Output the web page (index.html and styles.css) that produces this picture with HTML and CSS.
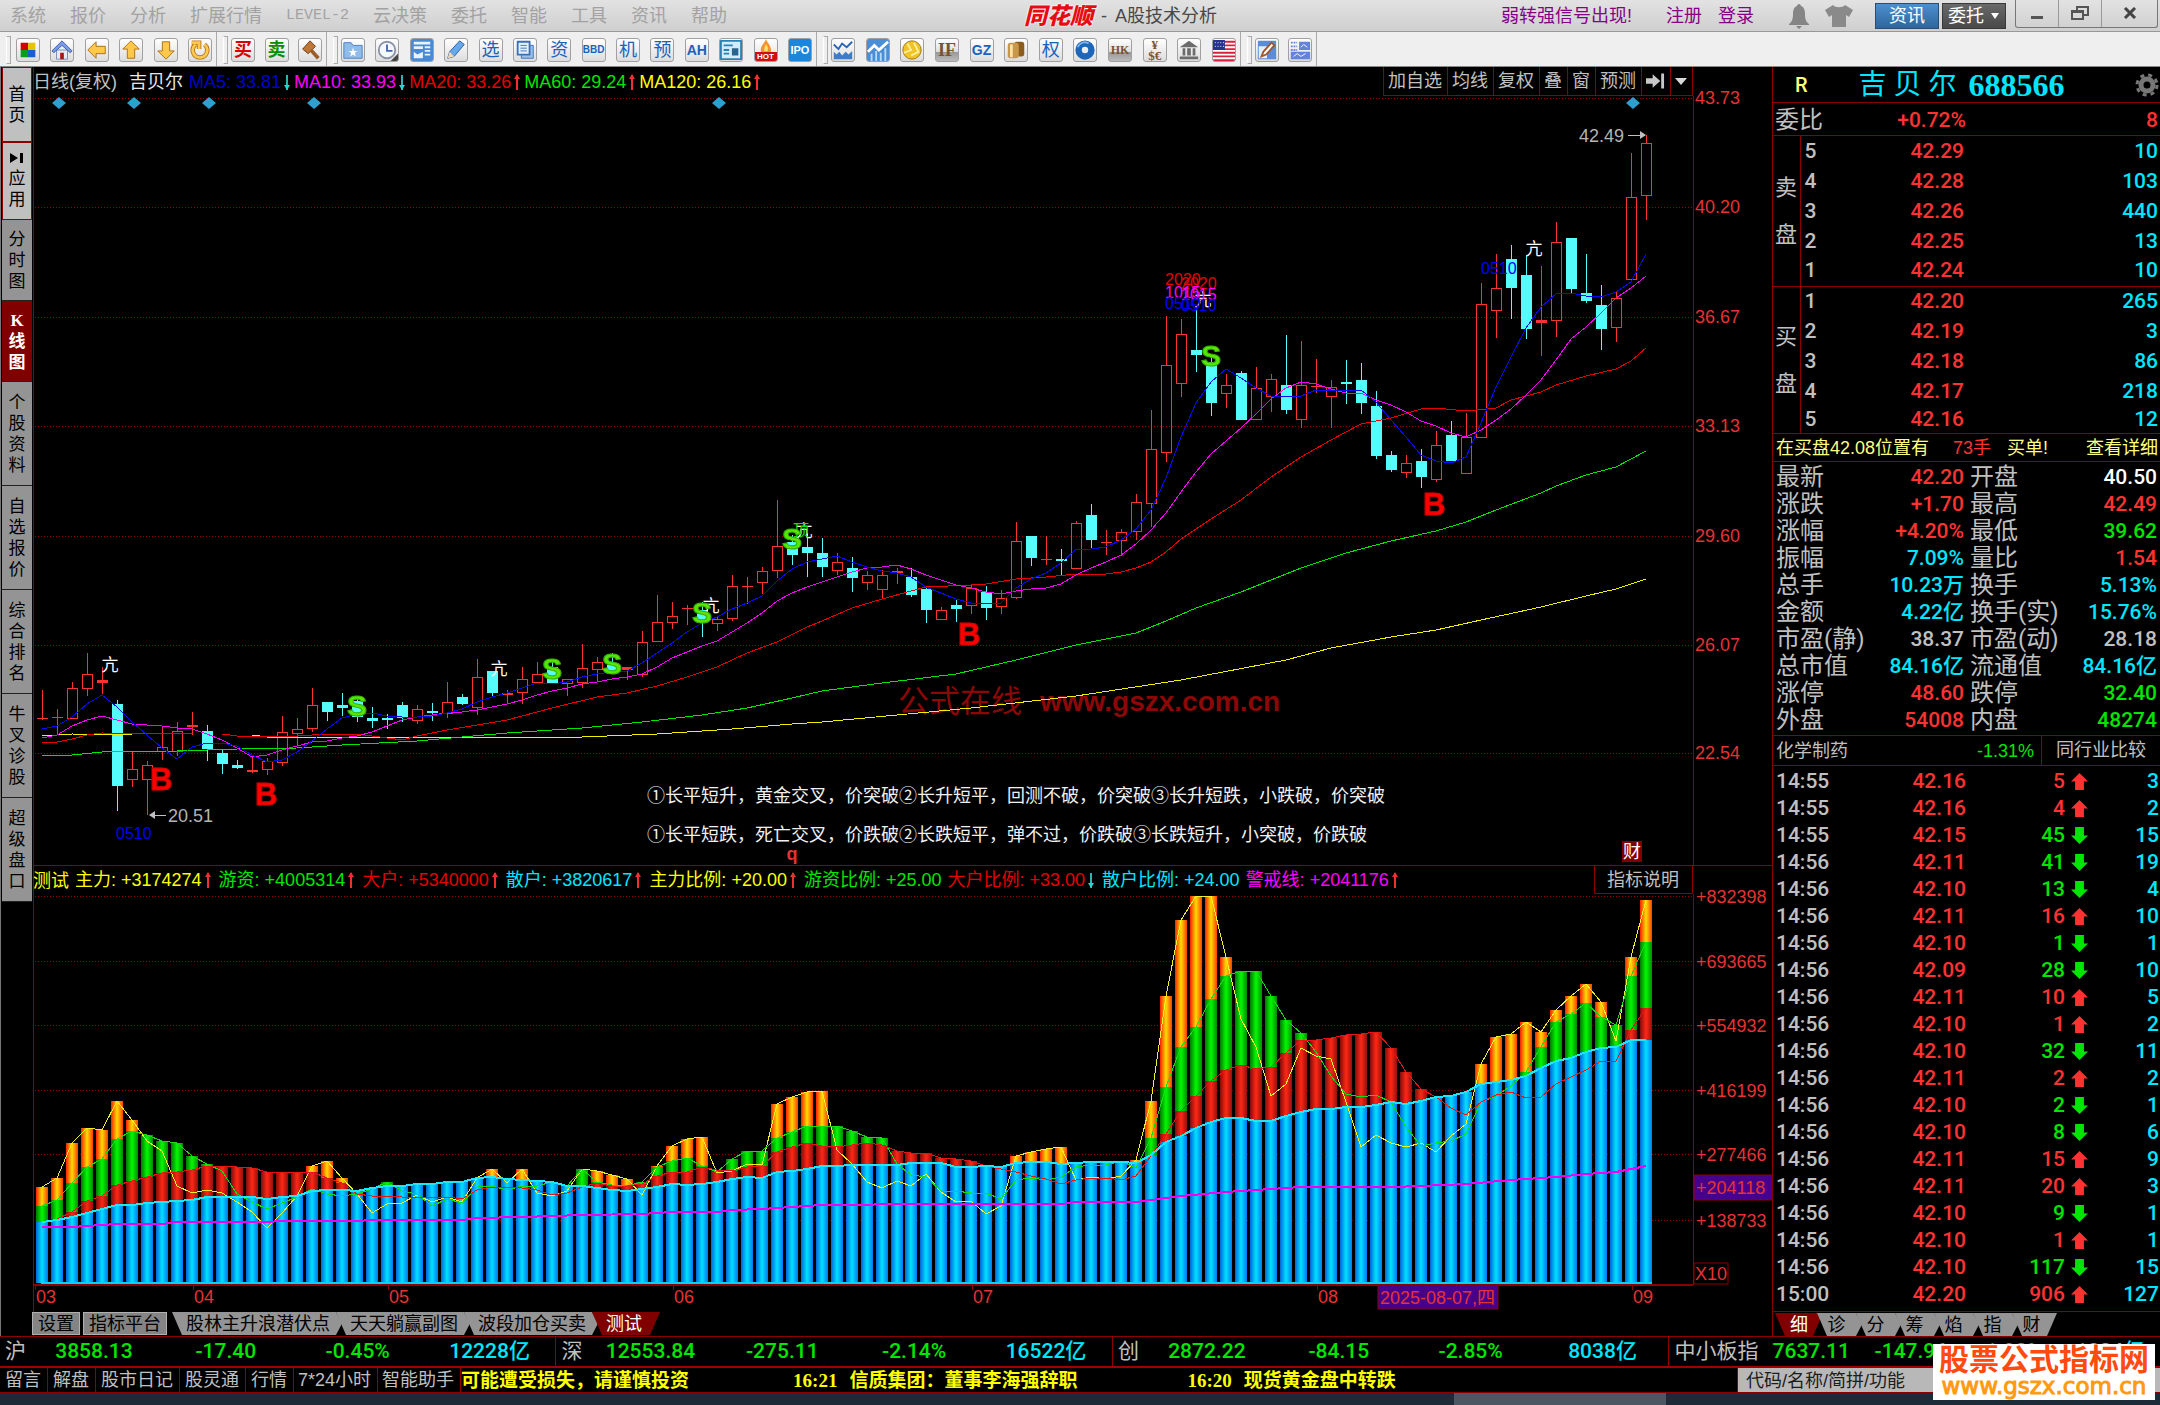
FILE: index.html
```html
<!DOCTYPE html>
<html lang="zh-CN">
<head>
<meta charset="utf-8">
<title>同花顺 - A股技术分析</title>
<link rel="stylesheet" href="styles.css">
</head>
<body>
<header class="titlebar">
  <nav class="menu">
    <a href="#">系统</a><a href="#">报价</a><a href="#">分析</a><a href="#">扩展行情</a><a href="#" class="latin">LEVEL-2</a><a href="#">云决策</a><a href="#">委托</a><a href="#">智能</a><a href="#">工具</a><a href="#">资讯</a><a href="#">帮助</a>
  </nav>
  <h1 class="app-title"><span class="logo">同花顺</span><span>-</span><span>A股技术分析</span></h1>
  <div class="account">
    <a href="#" class="signal">弱转强信号出现!</a><a href="#" class="register">注册</a><a href="#">登录</a>
    <svg class="bell" width="22" height="26" viewBox="0 0 22 26"><path d="M11 1c1 0 2 1 2 2 3 1 4 4 4 8 0 5 1 8 4 10v1H1v-1c3-2 4-5 4-10 0-4 1-7 4-8 0-1 1-2 2-2zM8 23h6l-3 3z" fill="#858585"/></svg>
    <svg class="shirt" width="30" height="24" viewBox="0 0 30 24"><path d="M9 1c2 3 10 3 12 0l8 5-4 7-3-2v12H8V11l-3 2-4-7z" fill="#8a8a8a"/></svg>
    <button class="pill blue">资讯</button>
    <button class="pill dark">委托<svg width="10" height="6" viewBox="0 0 10 6"><path d="M1 0h8L5 6z" fill="#fff"/></svg></button>
  </div>
  <div class="window-buttons">
    <button aria-label="最小化"><svg width="14" height="14" viewBox="0 0 14 14"><path d="M1 10h12v3H1z" fill="#555"/></svg></button>
    <button aria-label="还原"><svg width="18" height="14" viewBox="0 0 18 14"><path d="M6 4V1h11v8h-4M1 5h11v8H1zM1 6h11" fill="none" stroke="#555" stroke-width="2"/></svg></button>
    <button aria-label="关闭"><svg width="14" height="12" viewBox="0 0 14 12"><path d="M2 1l10 10M12 1L2 11" stroke="#444" stroke-width="3"/></svg></button>
  </div>
</header>

<div class="toolbar">
  <div class="tools g6">
    <button aria-label="面板"><svg viewBox="0 0 24 24"><path d="M4 4h8v8H4z" fill="#d40000"/><path d="M12 4h8v8h-8z" fill="#e8c400"/><path d="M4 12h8v8H4z" fill="#0a9c1e"/><path d="M12 12h8v8h-8z" fill="#1560d4"/></svg></button>
    <button aria-label="首页"><svg viewBox="0 0 24 24"><path d="M6 12h12v10H6z" fill="#e8e8f4" stroke="#7a86b8"/><path d="M1 13L12 2l11 11-2 2-9-8-9 8z" fill="#7c9ae4" stroke="#3a5cb4"/><path d="M10 15h4v7h-4z" fill="#b01010"/></svg></button>
    <button aria-label="后退"><svg viewBox="0 0 24 24"><path d="M2 12l9-9v5h10v8H11v5z" fill="#ffc84a" stroke="#a86c10"/></svg></button>
    <button aria-label="上翻"><svg viewBox="0 0 24 24"><path d="M12 2l9 9h-5v10H8V11H3z" fill="#ffc84a" stroke="#a86c10"/></svg></button>
    <button aria-label="下翻"><svg viewBox="0 0 24 24"><path d="M12 22l9-9h-5V3H8v10H3z" fill="#ffc84a" stroke="#a86c10"/></svg></button>
    <button aria-label="刷新"><svg viewBox="0 0 24 24"><path d="M17 6a8 8 0 1 1-10 0M3 4h8v7" fill="none" stroke="#b87818" stroke-width="5"/><path d="M17 6a8 8 0 1 1-10 0M3 4h8v7" fill="none" stroke="#ffc850" stroke-width="3"/></svg></button>
  </div>
  <div class="tools g3">
    <button class="glyph red">买</button>
    <button class="glyph green">卖</button>
    <button aria-label="法槌"><svg viewBox="0 0 24 24"><path d="M4 11L12 2l6 6-8 8z" fill="#c07838" stroke="#6e3a10"/><path d="M13 12l8 9" stroke="#9a5c28" stroke-width="4"/></svg></button>
  </div>
  <div class="tools g14">
    <button aria-label="收藏"><svg viewBox="0 0 24 24"><path d="M2 4h8l2 3h10v14H2z" fill="#8fbcea" stroke="#4a7fc0"/><path d="M12 9l1 4h4l-3 2 1 4-3-2-3 2 1-4-3-2h4z" fill="#fff"/></svg></button>
    <button aria-label="时钟"><svg viewBox="0 0 24 24"><circle cx="12" cy="12" r="9" fill="#f4f8ff" stroke="#8a94a8" stroke-width="2"/><path d="M12 6v7h6" fill="none" stroke="#4466b0" stroke-width="2"/><path d="M24 16v8h-8z" fill="#444"/></svg></button>
    <button aria-label="报表"><svg viewBox="0 0 24 24"><path d="M0 0h24v24H0z" fill="#4a8ad4"/><path d="M3 3h18v3H3zM3 8h10v3H3zM15 8h6v2h-6zM15 12h6v2h-6zM15 16h6v2h-6zM3 14l4 3 6-3v7H3z" fill="#e8f2ff"/></svg></button>
    <button aria-label="画笔"><svg viewBox="0 0 24 24"><path d="M3 21l2-7L16 2l5 4-11 13z" fill="#66a8ea" stroke="#2c5c9c"/><path d="M3 21l2-7 5 5z" fill="#f4d8b0"/></svg></button>
    <button class="glyph">选</button>
    <button aria-label="文档"><svg viewBox="0 0 24 24"><path d="M8 7h13v14H8z" fill="#9cc0ea" stroke="#3c70b4"/><path d="M4 3h13v14H4z" fill="#e4f0ff" stroke="#3c70b4" stroke-width="2"/><path d="M7 7h7M7 10h7M7 13h7" stroke="#3c70b4"/></svg></button>
    <button class="glyph">资</button>
    <button class="glyph tiny">BBD</button>
    <button class="glyph">机</button>
    <button class="glyph">预</button>
    <button class="glyph mid">AH</button>
    <button aria-label="新闻"><svg viewBox="0 0 24 24"><path d="M1 2h22v20H1z" fill="#d4ecfa" stroke="#2a82b4" stroke-width="2"/><path d="M4 7h10M4 12h6M4 16h6" stroke="#2a82b4" stroke-width="2"/><path d="M13 10h7v8h-7z" fill="#28648c"/></svg></button>
    <button aria-label="热点" class="hot"><svg viewBox="0 0 24 16"><path d="M12 0c1 5 7 7 6 16H6C4 8 10 7 12 0z" fill="#f8902c"/><path d="M12 6c2 3 3 5 2 9h-4c-1-4 1-6 2-9z" fill="#ffe060"/></svg><span>HOT</span></button>
    <button class="glyph ipo">IPO</button>
  </div>
  <div class="tools g12">
    <button aria-label="走势"><svg viewBox="0 0 24 24"><path d="M2 6l5 5 4-6 5 4 6-6" fill="none" stroke="#2864b4" stroke-width="2"/><path d="M2 22v-8l3 3 3-3 3 4 4-4 3 3 4-4v9z" fill="#3c7cc8"/></svg></button>
    <button aria-label="图表"><svg viewBox="0 0 24 24"><path d="M0 0h24v24H0z" fill="#4a8ed8"/><path d="M5 16v8M10 13v11M15 15v9M20 10v14" stroke="#bcd8f8" stroke-width="2"/><path d="M1 14l7-7 5 5L23 3" fill="none" stroke="#fff" stroke-width="3"/></svg></button>
    <button aria-label="金币"><svg viewBox="0 0 24 24"><circle cx="12" cy="12" r="10" fill="#f0c428" stroke="#9c7410"/><path d="M7 5l4 7-8 3M14 4l5 10-8 4" fill="none" stroke="#fff0a0" stroke-width="2"/></svg></button>
    <button class="glyph brown">IF</button>
    <button class="glyph mid">GZ</button>
    <button aria-label="商品"><svg viewBox="0 0 24 24"><rect x="10" y="3" width="11" height="16" rx="3" fill="#8c5c1c"/><rect x="3" y="4" width="12" height="17" rx="3" fill="#c8984a"/><path d="M7 6v14" stroke="#fbe4a8" stroke-width="3"/></svg></button>
    <button class="glyph">权</button>
    <button aria-label="基金"><svg viewBox="0 0 24 24"><circle cx="12" cy="12" r="7" fill="none" stroke="#1f66b8" stroke-width="7"/><path d="M4 9c2-5 8-7 12-4" fill="none" stroke="#7cb4ee" stroke-width="2"/></svg></button>
    <button class="glyph brown small">HK</button>
    <button class="glyph brown two"><span>¥</span><span>$€</span></button>
    <button aria-label="银行"><svg viewBox="0 0 24 24"><path d="M2 9l10-7 10 7zM5 10h3v8H5zM10 10h4v8h-4zM16 10h3v8h-3zM2 19h20v3H2z" fill="#6c6c6c"/></svg></button>
    <button aria-label="美股"><svg viewBox="0 0 24 24"><path d="M0 1h24v22H0z" fill="#fff"/><path d="M0 3h24M0 7h24M0 11h24M0 15h24M0 19h24M0 23h24" stroke="#d8203c" stroke-width="2"/><path d="M0 1h13v11H0z" fill="#24348c"/><path d="M2 4h10M2 8h10" stroke="#fff" stroke-width="1" stroke-dasharray="1 2"/></svg></button>
  </div>
  <div class="tools g2">
    <button aria-label="编辑图表"><svg viewBox="0 0 24 24"><path d="M2 2h20v20H2z" fill="#5a8cd8"/><path d="M3 8h9v13H3z" fill="#e4eefc"/><path d="M6 19l2-5 9-10 3 3-9 10z" fill="#fff" stroke="#a05828" stroke-width="2"/></svg></button>
    <button aria-label="布局"><svg viewBox="0 0 24 24"><path d="M11 3h12v9H11zM2 14h21v8H2z" fill="#6484dc"/><path d="M2 4h7M2 8h7M2 12h7" stroke="#6484dc" stroke-width="2" stroke-dasharray="2 1"/><path d="M13 9l3-3 4 3M5 19l4-3 4 3 5-3" fill="none" stroke="#fff"/></svg></button>
  </div>
</div>

<main class="workspace">
  <nav class="sidebar">
    <button class="side light home">首页</button>
    <button class="side light app"><svg width="14" height="12" viewBox="0 0 14 12"><path d="M0 1l8 5-8 5zM10 1h3v10h-3z" fill="#000"/></svg>应用</button>
    <button class="side three">分时图</button>
    <button class="side three active">K线图</button>
    <button class="side four">个股资料</button>
    <button class="side four">自选报价</button>
    <button class="side four">综合排名</button>
    <button class="side four">牛叉诊股</button>
    <button class="side four">超级盘口</button>
  </nav>

  <section class="charts">
    <div class="pane-head">
      <p class="readout">
        <span class="name">日线(复权)</span><span class="stock">吉贝尔</span>
        <span class="val c-blue">MA5: 33.81<i class="dn"></i></span><span class="val c-mag">MA10: 33.93<i class="dn"></i></span><span class="val c-red">MA20: 33.26<i class="up"></i></span><span class="val c-green">MA60: 29.24<i class="up"></i></span><span class="val c-yel">MA120: 26.16<i class="up"></i></span>
      </p>
      <div class="pane-tools">
        <button>加自选</button><button>均线</button><button>复权</button><button>叠</button><button>窗</button><button>预测</button><button aria-label="下一只"><svg width="19" height="16" viewBox="0 0 20 16"><path d="M0 5h7V1l8 7-8 7v-4H0zM16 0h3v16h-3z" fill="#c8c8c8"/></svg></button><button aria-label="更多"><svg width="12" height="7" viewBox="0 0 12 7"><path d="M0 0h12L6 7z" fill="#d8d8d8"/></svg></button>
      </div>
    </div>
    <svg class="plot price" id="price"></svg>
    <div class="pane-head sub">
      <p class="readout">
        <span class="title c-yel">测试</span>
        <span class="val wide c-yel">主力: +3174274<i class="up"></i></span><span class="val wide c-green">游资: +4005314<i class="up"></i></span><span class="val wide c-red">大户: +5340000<i class="up"></i></span><span class="val wide c-cyan">散户: +3820617<i class="up"></i></span><span class="val wide c-yel">主力比例: +20.00<i class="up"></i></span><span class="val flat c-green">游资比例: +25.00</span><span class="val wide c-red">大户比例: +33.00<i class="dn"></i></span><span class="val flat c-cyan">散户比例: +24.00</span><span class="val wide c-mag">警戒线: +2041176<i class="up"></i></span>
      </p>
      <button class="explain">指标说明</button>
    </div>
    <svg class="plot volume" id="volume"></svg>
    <div class="tabs">
      <button class="box">设置</button><button class="box">指标平台</button>
      <button class="tab first">股林主升浪潜伏点</button><button class="tab">天天躺赢副图</button><button class="tab">波段加仓买卖</button><button class="tab on">测试</button>
    </div>
  </section>

  <aside class="quote">
    <header class="quote-head">
      <span class="flag">R</span>
      <h2><span>吉 贝 尔</span><b>688566</b></h2>
      <svg width="24" height="24" viewBox="0 0 24 24"><circle cx="12" cy="12" r="6" fill="none" stroke="#777" stroke-width="5"/><circle cx="12" cy="12" r="10" fill="none" stroke="#777" stroke-width="3" stroke-dasharray="4 4"/></svg>
    </header>
    <div class="ratio"><span class="lab">委比</span><b class="r">+0.72%</b><b class="r">8</b></div>
    <table class="book">
      <tbody>
        <tr><th rowspan="5">卖<br>盘</th><td>5</td><td class="r">42.29</td><td class="c">10</td></tr>
        <tr><td>4</td><td class="r">42.28</td><td class="c">103</td></tr>
        <tr><td>3</td><td class="r">42.26</td><td class="c">440</td></tr>
        <tr><td>2</td><td class="r">42.25</td><td class="c">13</td></tr>
        <tr><td>1</td><td class="r">42.24</td><td class="c">10</td></tr>
      </tbody>
      <tbody>
        <tr><th rowspan="5">买<br>盘</th><td>1</td><td class="r">42.20</td><td class="c">265</td></tr>
        <tr><td>2</td><td class="r">42.19</td><td class="c">3</td></tr>
        <tr><td>3</td><td class="r">42.18</td><td class="c">86</td></tr>
        <tr><td>4</td><td class="r">42.17</td><td class="c">218</td></tr>
        <tr class="end"><td>5</td><td class="r">42.16</td><td class="c">12</td></tr>
      </tbody>
    </table>
    <p class="notice"><span>在买盘42.08位置有</span><span class="r">73手</span><span>买单!</span><a href="#">查看详细</a></p>
    <table class="stats">
      <tr><th>最新</th><td class="r">42.20</td><th>开盘</th><td class="w">40.50</td></tr>
      <tr><th>涨跌</th><td class="r">+1.70</td><th>最高</th><td class="r">42.49</td></tr>
      <tr><th>涨幅</th><td class="r">+4.20%</td><th>最低</th><td class="g">39.62</td></tr>
      <tr><th>振幅</th><td class="c">7.09%</td><th>量比</th><td class="r">1.54</td></tr>
      <tr><th>总手</th><td class="c">10.23万</td><th>换手</th><td class="c">5.13%</td></tr>
      <tr><th>金额</th><td class="c">4.22亿</td><th>换手(实)</th><td class="c">15.76%</td></tr>
      <tr><th>市盈(静)</th><td>38.37</td><th>市盈(动)</th><td>28.18</td></tr>
      <tr><th>总市值</th><td class="c">84.16亿</td><th>流通值</th><td class="c">84.16亿</td></tr>
      <tr><th>涨停</th><td class="r">48.60</td><th>跌停</th><td class="g">32.40</td></tr>
      <tr><th>外盘</th><td class="r">54008</td><th>内盘</th><td class="g">48274</td></tr>
    </table>
    <div class="industry"><span>化学制药</span><span class="g">-1.31%</span><a href="#">同行业比较</a></div>
    <div class="ticks">
      <table>
        <tr><td>14:55</td><td class="r">42.16</td><td class="r">5</td><td><i class="bu"></i></td><td class="c">3</td></tr>
        <tr><td>14:55</td><td class="r">42.16</td><td class="r">4</td><td><i class="bu"></i></td><td class="c">2</td></tr>
        <tr><td>14:55</td><td class="r">42.15</td><td class="g">45</td><td><i class="bd"></i></td><td class="c">15</td></tr>
        <tr><td>14:56</td><td class="r">42.11</td><td class="g">41</td><td><i class="bd"></i></td><td class="c">19</td></tr>
        <tr><td>14:56</td><td class="r">42.10</td><td class="g">13</td><td><i class="bd"></i></td><td class="c">4</td></tr>
        <tr><td>14:56</td><td class="r">42.11</td><td class="r">16</td><td><i class="bu"></i></td><td class="c">10</td></tr>
        <tr><td>14:56</td><td class="r">42.10</td><td class="g">1</td><td><i class="bd"></i></td><td class="c">1</td></tr>
        <tr><td>14:56</td><td class="r">42.09</td><td class="g">28</td><td><i class="bd"></i></td><td class="c">10</td></tr>
        <tr><td>14:56</td><td class="r">42.11</td><td class="r">10</td><td><i class="bu"></i></td><td class="c">5</td></tr>
        <tr><td>14:56</td><td class="r">42.10</td><td class="r">1</td><td><i class="bu"></i></td><td class="c">2</td></tr>
        <tr><td>14:56</td><td class="r">42.10</td><td class="g">32</td><td><i class="bd"></i></td><td class="c">11</td></tr>
        <tr><td>14:56</td><td class="r">42.11</td><td class="r">2</td><td><i class="bu"></i></td><td class="c">2</td></tr>
        <tr><td>14:56</td><td class="r">42.10</td><td class="g">2</td><td><i class="bd"></i></td><td class="c">1</td></tr>
        <tr><td>14:56</td><td class="r">42.10</td><td class="g">8</td><td><i class="bd"></i></td><td class="c">6</td></tr>
        <tr><td>14:56</td><td class="r">42.11</td><td class="r">15</td><td><i class="bu"></i></td><td class="c">9</td></tr>
        <tr><td>14:56</td><td class="r">42.11</td><td class="r">20</td><td><i class="bu"></i></td><td class="c">3</td></tr>
        <tr><td>14:56</td><td class="r">42.10</td><td class="g">9</td><td><i class="bd"></i></td><td class="c">1</td></tr>
        <tr><td>14:56</td><td class="r">42.10</td><td class="r">1</td><td><i class="bu"></i></td><td class="c">1</td></tr>
        <tr><td>14:56</td><td class="r">42.10</td><td class="g">117</td><td><i class="bd"></i></td><td class="c">15</td></tr>
        <tr><td>15:00</td><td class="r">42.20</td><td class="r">906</td><td><i class="bu"></i></td><td class="c">127</td></tr>
      </table>
    </div>
    <div class="tabs right">
      <button class="tab on">细</button><button class="tab">诊</button><button class="tab">分</button><button class="tab">筹</button><button class="tab">焰</button><button class="tab">指</button><button class="tab last">财</button>
    </div>
  </aside>
</main>

<section class="indices">
  <div class="index"><span>沪</span><b>3858.13</b><b>-17.40</b><b>-0.45%</b><b class="c">12228亿</b></div>
  <div class="index"><span>深</span><b>12553.84</b><b>-275.11</b><b>-2.14%</b><b class="c">16522亿</b></div>
  <div class="index"><span>创</span><b>2872.22</b><b>-84.15</b><b>-2.85%</b><b class="c">8038亿</b></div>
  <div class="index small"><span>中小板指</span><b>7637.11</b><b>-147.96</b><b>-1.90%</b><b class="c">1234亿</b></div>
</section>

<footer class="ticker">
  <nav><a href="#">留言</a><a href="#">解盘</a><a href="#">股市日记</a><a href="#">股灵通</a><a href="#">行情</a><a href="#">7*24小时</a><a href="#">智能助手</a></nav>
  <p class="news"><span class="n1">可能遭受损失，请谨慎投资</span><span class="n2"><time>16:21</time>信质集团：董事李海强辞职</span><span><time>16:20</time>现货黄金盘中转跌</span></p>
  <input class="search" type="text" aria-label="搜索" placeholder="代码/名称/简拼/功能">
</footer>
<div class="desktop"><span></span></div>
<div class="sitemark"><strong>股票公式指标网</strong><span>www.gszx.com.cn</span></div>
<script src="charts.js"></script>
</body>
</html>
```
FILE: styles.css
```css
* { box-sizing: border-box; }
html, body { height: 100%; }
body {
  margin: 0; display: flex; flex-direction: column; background: #000; color: #c0c0c0;
  font: 18px/24px "Liberation Sans", "Noto Sans CJK SC", sans-serif; overflow: hidden;
}
button { font: inherit; color: inherit; background: none; border: 0; padding: 0; margin: 0; }
a { color: inherit; text-decoration: none; }
p, h1, h2 { margin: 0; font: inherit; }
table { border-collapse: collapse; width: 100%; table-layout: fixed; }
th, td { padding: 0; font-weight: inherit; }
svg { display: block; flex: none; }
.r { color: #ff3232; }
.g { color: #00e600; }
.c { color: #00e6ff; }
.w { color: #fff; }
.c-blue { color: #0000d2; }
.c-mag { color: #ff00ff; }
.c-red { color: #e60000; }
.c-green { color: #00e600; }
.c-yel { color: #ffff00; }
.c-cyan { color: #00e6ff; }

/* title bar */
.titlebar {
  height: 32px; flex: none; display: flex; position: relative; align-items: center;
  background: linear-gradient(#e2e2e2, #cfcfcf); border-bottom: 1px solid #989898; color: #484848;
}
.menu { display: flex; gap: 24px; padding-left: 10px; color: #a2a2a2; }
.menu .latin { font-family: "Liberation Mono", monospace; font-size: 15px; }
.app-title {
  position: absolute; left: 50%; margin-left: -56px; display: flex; align-items: center; gap: 8px;
}
.logo { font-size: 23px; font-weight: 900; font-style: italic; color: #e60c14; text-shadow: 0 0 2px #fff, 0 0 2px #fff; }
.account { margin-left: auto; display: flex; align-items: center; color: #860086; }
.signal { margin-right: 34px; }
.register { margin-right: 16px; }
.bell { margin: 0 14px 0 34px; }
.shirt { margin-right: 21px; }
.pill {
  width: 64px; height: 26px; margin-right: 3px; color: #fff; border: 1px solid #2a4d74;
  background: linear-gradient(#4b90cf, #2f659c); display: flex; align-items: center; justify-content: center; gap: 6px;
}
.pill.dark { background: linear-gradient(#6a6a6a, #484848); border-color: #3a3a3a; }
.window-buttons { display: flex; margin: 0 2px 4px 6px; border: 1px solid #777; border-top: 0; border-radius: 0 0 3px 3px; }
.window-buttons button { width: 43px; height: 27px; display: flex; align-items: center; justify-content: center; border-right: 1px solid #999; }
.window-buttons button:last-child { width: 55px; border: 0; }

/* icon toolbar */
.toolbar { height: 35px; flex: none; display: flex; background: #efefef; border-bottom: 1px solid #888; }
.tools {
  display: flex; justify-content: space-between; align-items: center; padding: 1px 4px 0 14px;
  border-right: 1px solid #aaa; position: relative;
}
.tools::before { content: ""; position: absolute; left: 6px; top: 4px; width: 3px; height: 26px; border: 1px solid #aaa; border-left-color: #fff; }
.tools button {
  width: 24px; height: 24px; border: 1px solid #a0a0a0; border-radius: 3px; overflow: hidden;
  background: linear-gradient(#fff, #dcdcdc); display: flex; align-items: center; justify-content: center;
}
.tools button svg { width: 22px; height: 22px; }
.g6 { width: 217px; padding-left: 16px; }
.g3 { width: 110px; }
.g14 { width: 490px; }
.g12 { width: 424px; }
.g2 { width: 76px; }
.tools .glyph { font-size: 18px; line-height: 22px; color: #1a62bc; }
.tools .red { color: #d80000; font-weight: 700; }
.tools .green { color: #0a8c00; font-weight: 700; }
.tools .tiny { font-size: 10px; font-weight: 700; }
.tools .mid { font-size: 14px; font-weight: 700; }
.tools .small { font-size: 12px; font-weight: 700; }
.tools .ipo { font-size: 11px; font-weight: 700; color: #fff; background: #1a86dc; }
.tools .brown { color: #7a5230; font-family: "Liberation Serif", serif; font-weight: 700; background: linear-gradient(#fff, #ddd 60%, #999 61%, #bbb); }
.tools .two { flex-direction: column; font-size: 13px; line-height: 11px; background: linear-gradient(#fff, #dcdcdc); }
.tools .hot { flex-direction: column; justify-content: flex-end; }
.tools .hot svg { height: 13px; }
.tools .hot span { width: 100%; background: #cc1010; color: #fff; font-size: 8px; line-height: 9px; font-weight: 700; text-align: center; }

/* workspace */
.workspace { flex: 1; min-height: 0; display: flex; }
.sidebar { width: 33px; flex: none; padding-left: 1px; border-left: 1px solid #777; }
.side {
  width: 30px; display: flex; flex-direction: column; align-items: center; justify-content: center;
  font: 17px/21px "Liberation Serif", "Noto Sans CJK SC", serif; color: #000; background: #949494;
  border-bottom: 1px solid #222; padding: 0 6px; word-break: break-all;
}
.light { background: #c0c0c0; border: 1px solid #8c0000; padding: 0 5px; }
.home { height: 75px; }
.app { height: 78px; }
.app svg { margin-bottom: 4px; }
.three { height: 81px; }
.four { height: 104px; }
.active { background: #800000; color: #fff; font-weight: 700; }
.charts { flex: 1; min-width: 0; display: flex; flex-direction: column; border-left: 1px solid #8c0000; }
.pane-head { height: 29px; flex: none; display: flex; justify-content: space-between; padding-right: 79px; }
.sub { border-top: 1px solid #8c0000; }
.readout { display: flex; white-space: nowrap; line-height: 30px; margin-left: -1px; }
.name { margin-right: 12px; }
.stock { color: #e8e8e8; margin-right: 6px; }
.title { margin-right: 6px; }
.val { display: flex; align-items: center; }
.flat { margin-right: 6px; }
.val i { width: 13px; height: 18px; }
.wide i { width: 17px; }
.up, .dn { position: relative; }
.up::before, .dn::before { content: ""; position: absolute; left: 5px; top: 2px; width: 2px; height: 15px; background: #f03030; }
.dn::before { background: #2ab4b4; }
.up::after, .dn::after { content: ""; position: absolute; left: 3px; border: 3px solid transparent; border-bottom: 5px solid #f03030; top: -2px; }
.dn::after { border-bottom: 3px solid transparent; border-top: 5px solid #2ad4d4; top: 12px; }
.pane-tools { display: flex; border-right: 1px solid #8c0000; border-bottom: 1px solid #8c0000; }
.pane-tools button { border-left: 1px solid #8c0000; padding: 0 5px 0 4px; display: flex; align-items: center; }
.explain { border: 1px solid #8c0000; border-top: 0; padding: 0 13px 0 12px; line-height: 28px; }
.plot { width: 100%; min-height: 0; overflow: visible; }
.price { flex: 770 1 0; }
.volume { flex: 417 1 0; }
.plot text { font-size: 18px; fill: #e63232; }

/* slanted tabs */
.tabs { height: 25px; flex: none; display: flex; padding: 1px 0; }
.charts .tabs { margin-left: -2px; }
.box { background: #848484; color: #000; border: 1px solid #b0b0b0; padding: 0 5px; margin-right: 3px; line-height: 20px; }
.tab {
  height: 23px; line-height: 22px; padding: 0 12px 0 14px; margin-left: -6px; background: #949494; color: #000;
  clip-path: polygon(0 0, calc(100% - 6px) 0, 100% 50%, calc(100% - 6px) 100%, 10px 100%);
}
.tab.first { margin-left: 2px; }
.tab.on, .tab.last { padding-right: 18px; clip-path: polygon(0 0, 100% 0, calc(100% - 10px) 100%, 10px 100%); }
.tab.on { background: #800000; color: #fff; }
.tabs.right { border-top: 1px solid #8c0000; padding: 1px 0 0 2px; }
.tabs.right .tab { width: 45px; padding: 0 6px 0 0; }
.tabs.right .tab.on { width: 48px; margin-left: 0; padding: 0; }

/* quote panel */
.quote { width: 388px; flex: none; display: flex; flex-direction: column; border-left: 1px solid #8c0000; }
.quote-head { height: 36px; flex: none; display: flex; align-items: center; padding: 0 1px 0 22px; border-bottom: 1px solid #8c0000; }
.flag { color: #ffff80; font-size: 20px; font-weight: 500; font-family: Roboto, sans-serif; }
.quote-head h2 { margin: 0 auto 0 51px; display: flex; align-items: center; gap: 12px; color: #00e6ff; font: 28px/34px "Liberation Serif", "Noto Sans CJK SC", serif; }
.quote-head b { font-size: 32px; }
.ratio, .book, .stats, .ticks { font: 500 21px/27px Roboto, "Noto Sans CJK SC", sans-serif; }
.ratio { height: 33px; flex: none; display: grid; grid-template-columns: 76px 115px 1fr; align-items: center; padding: 3px 2px 0 2px; text-align: right; border-bottom: 1px solid #8c0000; }
.ratio b, .index b { font-weight: 500; }
.lab, .book th, .stats th { font-size: 24px; font-weight: 400; text-align: left; }
.book tbody { border-bottom: 1px solid #8c0000; }
.book tr { height: 30px; }
.book .end { height: 27px; }
.book th { width: 27px; border-right: 1px solid #8c0000; line-height: 47px; padding-left: 2px; font-size: 22px; }
.book td { text-align: right; padding-right: 2px; }
.book td:nth-last-child(3) { width: 40px; text-align: left; padding-left: 4px; }
.book td:nth-last-child(2) { width: 126px; }
.notice { height: 28px; flex: none; display: flex; align-items: center; padding: 0 2px 0 3px; color: #ffff80; border-bottom: 1px solid #8c0000; white-space: nowrap; }
.notice .r { margin: 0 16px 0 24px; }
.notice a { margin-left: auto; }
.stats { margin: 2px 0 1px; }
.stats tr { height: 27px; }
.stats th { padding-left: 3px; white-space: nowrap; }
.stats td { text-align: right; padding-right: 3px; white-space: nowrap; }
.stats th:first-child { width: 93px; }
.stats td:nth-child(2) { width: 101px; }
.industry { height: 31px; flex: none; display: flex; align-items: center; padding-left: 3px; border: solid #8c0000; border-width: 1px 0; }
.industry .g { margin: 0 7px 0 auto; }
.industry a { border-left: 1px solid #8c0000; padding: 2px 14px; line-height: 25px; }
.ticks { flex: 1; min-height: 0; padding: 2px 1px 0 3px; }
.ticks tr { height: 27px; }
.ticks td { text-align: right; }
.ticks td:first-child { text-align: left; width: 60px; }
.ticks td:nth-child(2) { width: 130px; }
.ticks td:nth-child(3) { width: 99px; }
.ticks td:nth-child(4) { width: 28px; }
.ticks i { display: block; width: 17px; height: 17px; margin-left: 6px; background: #ff3232; clip-path: polygon(50% 0, 100% 50%, 76% 50%, 76% 100%, 24% 100%, 24% 50%, 0 50%); }
.ticks i.bd { background: #00e600; clip-path: polygon(50% 100%, 100% 50%, 76% 50%, 76% 0, 24% 0, 24% 50%, 0 50%); }

/* index strip and ticker */
.indices { height: 30px; flex: none; display: flex; border-top: 1px solid #8c0000; }
.index {
  flex: 556 1 0; display: grid; grid-template-columns: 28px repeat(4, 1fr); align-items: center; text-align: center;
  border-right: 1px solid #8c0000; color: #00e600; font: 500 21px/27px Roboto, "Noto Sans CJK SC", sans-serif; white-space: nowrap;
}
.index span { color: #c0c0c0; font-weight: 400; padding-left: 5px; text-align: left; }
.index.small { flex-grow: 491; border: 0; grid-template-columns: 92px repeat(4, 1fr); }
.index b.c { color: #00e6ff; }
.ticker { height: 27px; flex: none; display: flex; border-top: 2px solid #a00000; border-bottom: 1px solid #8c0000; }
.ticker nav { display: flex; }
.ticker nav a { padding: 0 6px 0 4px; border-right: 1px solid #8c0000; white-space: nowrap; }
.ticker nav a:nth-child(-n+5) { padding-left: 5px; }
.news { flex: 1; display: flex; overflow: hidden; white-space: nowrap; color: #ffff00; font: 700 19px/26px "Liberation Serif", "Noto Sans CJK SC", serif; }
.news time { margin-right: 12px; }
.n1 { margin-right: 104px; }
.n2 { margin-right: 110px; }
.search { width: 423px; border: 0; border-left: 1px solid #8c0000; background: #b8b8b8; padding: 2px 8px 0; font: inherit; border-radius: 0; }
.search::placeholder { color: #1c1c1c; opacity: 1; }
.desktop { height: 12px; flex: none; background: #1d2b38; display: flex; justify-content: flex-end; padding-right: 494px; }
.desktop span { width: 212px; background: #4b5762; }
.sitemark {
  position: absolute; right: 5px; bottom: 5px; width: 222px; height: 56px; background: #fff; text-align: center;
  display: flex; flex-direction: column; white-space: nowrap; overflow: hidden;
}
.sitemark strong { font-size: 30px; line-height: 31px; color: #ff4a10; }
.sitemark span { font: 23px/22px "DejaVu Sans", sans-serif; color: #ff9a10; -webkit-text-stroke: 1px #ff9a10; }
```
FILE: charts.js
```js
// Both panes are laid out on a 1739-unit wide grid and stretched to the size of their SVG.
const LEFT = 33, SPAN = 1739, FIRST = 41, STEP = 15;
const NS = 'http://www.w3.org/2000/svg';

// [rising, high, body top, body bottom, low]
const candles = [
[1,691,719,720,721],[1,710,718,719,736],[1,682,689,719,719],[1,653,674,689,697],[1,667,680,684,695],[0,701,705,786,812],
[1,753,770,780,788],[1,762,766,780,816],[1,728,748,752,761],[1,723,732,752,757],[1,713,726,728,736],[0,726,732,749,762],
[0,750,754,764,775],[0,761,766,768,770],[1,757,771,773,774],[1,759,762,770,776],[1,717,733,763,767],[1,719,730,734,746],
[1,689,706,729,733],[0,703,703,712,722],[0,694,706,708,717],[0,698,702,717,723],[0,708,719,721,729],[0,715,719,720,730],
[0,703,706,718,723],[1,706,710,721,725],[0,704,712,713,722],[1,683,703,714,719],[0,695,698,704,706],[1,659,677,708,716],
[0,671,671,693,697],[1,691,694,696,704],[1,667,679,693,705],[1,662,674,682,682],[0,662,667,683,684],[1,679,679,684,697],
[1,644,668,682,689],[1,657,662,669,682],[0,653,665,672,674],[1,667,667,670,680],[1,631,642,674,677],[1,595,622,641,641],
[1,602,616,622,629],[1,605,608,609,625],[0,602,610,620,637],[1,616,619,623,631],[1,575,586,618,621],[1,577,586,587,604],
[1,567,571,582,594],[1,500,546,570,578],[0,535,542,554,565],[0,533,547,552,577],[0,538,553,566,577],[1,553,562,570,575],
[0,557,568,577,592],[1,571,575,582,590],[1,570,575,589,599],[1,568,571,573,584],[0,568,577,594,597],[0,588,589,609,623],
[1,607,610,619,619],[0,599,605,608,622],[1,585,588,605,614],[0,586,592,607,620],[1,590,598,606,614],[1,522,541,597,599],
[0,536,536,557,566],[1,536,559,560,565],[0,549,559,560,576],[1,521,523,568,568],[0,504,515,539,548],[1,530,542,543,555],
[1,529,532,540,556],[1,494,502,531,540],[1,410,449,503,527],[1,316,365,452,462],[1,319,334,383,397],[0,308,350,354,372],
[0,358,362,402,416],[1,374,385,393,408],[0,371,373,419,419],[1,367,388,419,419],[1,374,379,396,412],[0,335,385,409,414],
[1,341,385,419,428],[1,359,386,387,393],[1,380,387,396,428],[0,360,382,383,404],[0,363,380,402,414],[0,391,406,455,459],
[0,451,455,469,472],[1,455,463,472,478],[0,449,461,476,488],[1,431,445,479,482],[0,421,435,460,461],[1,413,437,473,473],
[1,283,304,437,437],[1,254,288,310,338],[0,245,259,287,319],[0,255,275,328,339],[1,266,320,323,356],[1,222,242,320,337],
[0,238,238,288,293],[0,254,293,300,303],[0,285,305,328,350],[1,292,298,327,342],[1,153,197,279,282],[1,135,143,195,220]];

const ma5 = [730,727,718,705,696,708,723,736,749,760,748,744,744,747,756,763,761,753,742,730,719,715,714,717,718,718,717,714,710,703,698,694,689,684,685,683,677,674,672,671,663,653,643,632,623,617,609,603,596,581,569,562,559,556,562,567,571,573,577,587,593,599,603,604,603,588,579,573,563,549,549,547,540,529,510,478,437,403,382,369,378,388,396,396,396,390,390,390,390,402,420,437,455,461,463,457,423,387,357,328,307,294,293,296,297,292,282,254];
const ma10 = [739,736,727,721,717,721,725,726,727,729,730,735,741,749,758,756,751,747,743,742,739,737,733,727,721,718,716,714,713,711,708,705,701,696,692,689,685,682,679,677,674,667,658,652,646,641,632,623,613,601,593,587,582,577,572,568,567,565,569,575,580,585,588,592,594,591,589,588,584,575,568,562,555,544,530,513,492,472,454,441,428,414,399,388,382,384,389,393,393,400,405,412,421,426,433,437,430,420,409,395,380,360,339,327,313,298,288,276];
const ma20 = [[0,744],[1,743],[2,740],[3,736],[4,734],[10,735],[12,735],[13,737],[15,738],[17,737],[19,735],[21,735],[24,741],[25,737],[27,731],[29,726],[31,721],[34,709],[37,698],[39,694],[41,687],[43,677],[45,667],[47,653],[49,642],[51,627],[52,621],[54,608],[56,599],[58,591],[59,587],[62,585],[63,584],[65,579],[67,577],[69,574],[71,574],[72,572],[73,568],[74,562],[75,552],[76,539],[77,529],[78,519],[80,500],[82,477],[84,457],[86,440],[88,424],[90,418],[92,409],[93,408],[95,411],[97,408],[98,400],[100,392],[101,385],[103,376],[105,369],[106,361],[107,348]];
const ma60 = [[0,757],[2,756],[4,753],[9,752],[13,750],[17,749],[20,746],[25,742],[28,738],[31,734],[36,729],[40,723],[44,716],[47,709],[50,699],[52,692],[56,684],[61,674],[65,660],[69,645],[73,633],[75,621],[77,608],[80,592],[82,580],[84,568],[87,553],[90,541],[93,531],[95,522],[97,510],[100,493],[101,486],[103,475],[105,467],[107,451]];
const ma120 = [[0,737],[2,735],[6,736],[14,736],[15,738],[29,738],[36,738],[41,735],[46,730],[50,725],[52,723],[57,716],[62,709],[69,697],[76,680],[83,660],[86,648],[90,637],[93,630],[96,620],[100,607],[103,596],[105,589],[107,579]];

const main = [1188,1179,1144,1129,1131,1102,1121,1142,1152,1187,1194,1191,1194,1203,1212,1228,1213,1197,1167,1162,1179,1195,1213,1205,1204,1196,1203,1198,1203,1179,1170,1184,1170,1194,1197,1192,1170,1172,1176,1180,1196,1167,1147,1140,1138,1174,1172,1165,1166,1105,1098,1093,1092,1151,1165,1183,1189,1182,1187,1175,1193,1203,1202,1214,1207,1157,1153,1150,1148,1181,1178,1180,1177,1161,1102,997,921,897,897,958,1020,1048,1097,1085,1049,1057,1060,1103,1148,1136,1144,1148,1144,1153,1137,1125,1065,1038,1035,1023,1033,1011,997,985,1003,1042,958,901];
const hot = [1207,1201,1184,1168,1160,1140,1132,1136,1142,1144,1157,1165,1172,1195,1203,1210,1204,1198,1190,1195,1197,1195,1190,1183,1192,1195,1207,1200,1204,1188,1187,1191,1187,1187,1183,1187,1170,1183,1186,1187,1183,1168,1162,1159,1167,1173,1160,1152,1152,1139,1133,1127,1127,1127,1132,1138,1139,1165,1176,1178,1192,1192,1194,1194,1200,1181,1179,1181,1178,1168,1166,1166,1162,1169,1139,1088,1048,1028,1000,977,972,972,997,1021,1034,1053,1077,1095,1098,1096,1103,1128,1147,1144,1142,1135,1103,1097,1087,1073,1048,1023,1015,1004,1018,1026,977,943];
const big = [1222,1219,1212,1202,1197,1186,1182,1178,1174,1173,1171,1167,1167,1168,1169,1173,1173,1173,1173,1179,1184,1195,1197,1197,1198,1198,1198,1198,1200,1191,1188,1188,1189,1191,1196,1194,1188,1184,1187,1187,1185,1177,1173,1173,1168,1171,1172,1168,1167,1153,1148,1144,1147,1148,1146,1144,1146,1152,1154,1154,1159,1160,1162,1167,1170,1173,1177,1180,1185,1181,1179,1179,1181,1177,1157,1135,1112,1097,1082,1071,1066,1070,1068,1054,1041,1041,1039,1036,1035,1033,1049,1073,1090,1098,1109,1116,1103,1096,1093,1099,1098,1085,1078,1071,1062,1062,1031,1009];
const retail = [1222,1220,1217,1213,1210,1206,1206,1204,1203,1202,1201,1198,1198,1198,1198,1200,1198,1197,1192,1191,1191,1192,1189,1187,1187,1185,1185,1183,1183,1179,1178,1180,1181,1182,1183,1187,1187,1189,1191,1192,1190,1188,1185,1186,1185,1183,1180,1178,1179,1173,1172,1170,1167,1167,1166,1166,1166,1166,1164,1164,1164,1168,1168,1167,1168,1164,1163,1163,1165,1164,1163,1163,1163,1164,1156,1143,1137,1129,1123,1119,1119,1122,1122,1117,1113,1110,1110,1108,1108,1106,1103,1105,1102,1098,1097,1093,1085,1083,1081,1077,1069,1062,1059,1053,1049,1048,1041,1041];
const alert = [[0,1227],[2,1227],[5,1224],[8,1224],[9,1222],[15,1222],[16,1221],[21,1221],[22,1220],[28,1220],[29,1218],[32,1217],[36,1215],[40,1214],[42,1212],[45,1212],[46,1211],[48,1210],[50,1208],[52,1206],[55,1206],[56,1205],[68,1205],[69,1203],[73,1203],[74,1201],[76,1197],[79,1193],[84,1188],[90,1188],[92,1187],[95,1185],[98,1181],[101,1178],[103,1175],[105,1173],[107,1167]];

function pane(id, top, height) {
  const svg = document.getElementById(id);
  svg.replaceChildren();
  const box = svg.getBoundingClientRect();
  const X = x => Math.round((x - LEFT) * box.width / SPAN);
  const Y = y => Math.round((y - top) * box.height / height);
  const add = (tag, attrs, text) => {
    const el = document.createElementNS(NS, tag);
    for (const k in attrs) el.setAttribute(k, attrs[k]);
    if (text !== undefined) el.textContent = text;
    svg.append(el);
    return el;
  };
  return {
    svg, X, Y, add,
    at: i => X(FIRST + STEP * i),
    line(x1, y1, x2, y2, stroke, extra) {
      add('path', Object.assign({ d: `M${X(x1)} ${Y(y1)}L${X(x2)} ${Y(y2)}`, stroke, 'shape-rendering': 'crispEdges' }, extra));
    },
    grid(y) { this.line(34, y, 1693, y, '#8c0000', { 'stroke-dasharray': '1 2' }); },
    curve(points, stroke, width = 1) {
      const d = points.map((p, i) => {
        const [k, y] = Array.isArray(p) ? p : [i, p];
        return `${X(FIRST + STEP * k)},${Y(y)}`;
      }).join(' ');
      add('polyline', { points: d, fill: 'none', stroke, 'stroke-width': width, 'shape-rendering': 'crispEdges' });
    },
    text(x, y, str, style = '', anchor = 'start') {
      add('text', { x: X(x), y: Y(y), 'dominant-baseline': 'central', 'text-anchor': anchor, style }, str);
    }
  };
}

function drawPrice() {
  const p = pane('price', 96, 770);
  ['43.73', '40.20', '36.67', '33.13', '29.60', '26.07', '22.54'].forEach((label, i) => {
    const y = 98 + Math.round(109.4 * i);
    p.grid(y);
    p.text(1695, y, label);
  });
  p.line(1693, 96, 1693, 866, '#8c0000');
  [58, 133, 208, 313, 718, 1633].forEach(x =>
    p.add('path', { d: `M${p.X(x)} ${p.Y(97)}l7 6-7 6-7-6z`, fill: '#2f9fd0' }));
  p.text(897, 702, '公式在线', 'font-size:31px;fill:#8c0808');
  p.text(1040, 702, 'www.gszx.com.cn', 'font-size:28px;font-weight:700;fill:#8c0808');
  candles.forEach(([up, hi, t, b, lo], i) => {
    const x = p.at(i), color = up ? '#ff3232' : '#54fcfc';
    const h = Math.max(p.Y(b) - p.Y(t), 1);
    const wick = h > 3 && up ? `M${x + .5} ${p.Y(hi)}V${p.Y(t)}M${x + .5} ${p.Y(b)}V${p.Y(lo)}` : `M${x + .5} ${p.Y(hi)}V${p.Y(lo)}`;
    p.add('path', { d: wick, stroke: color, 'shape-rendering': 'crispEdges' });
    if (h > 3 && up) p.add('rect', { x: x - 4.5, y: p.Y(t) + .5, width: 10, height: h, fill: 'none', stroke: color });
    else p.add('rect', { x: x - 5, y: p.Y(t), width: 11, height: h + (up ? 0 : 1), fill: color });
  });
  p.curve(ma120, '#f0f000');
  p.curve(ma60, '#00e600');
  p.curve(ma20, '#e60000');
  p.curve(ma10, '#ff00ff');
  p.curve(ma5, '#0a0af0');
  const white = 'font-size:17px;fill:#fff';
  [[109, 665], [498, 669], [710, 606], [803, 531], [1203, 300], [1534, 249]].forEach(([x, y]) => p.text(x, y, '亢', white, 'middle'));
  p.text(800, 530, '顶', 'font-size:16px;fill:#00e600', 'middle');
  [[160, 780], [265, 795], [969, 634], [1434, 504]].forEach(([x, y]) =>
    p.text(x, y, 'B', 'font-size:31px;font-weight:700;fill:#f00;stroke:#d00000', 'middle'));
  [[356, 706], [551, 668], [611, 663], [701, 612], [791, 538], [1211, 355]].forEach(([x, y]) =>
    p.text(x, y, 'S', 'font-size:30px;font-weight:700;fill:#5ae600;stroke:#32b400', 'middle'));
  const num = 'font-size:16px;fill:';
  p.text(115, 834, '0510', num + '#0000f0');
  p.text(1165, 279, '2020', num + '#e60000');
  p.text(1181, 283, '2020', num + '#e60000');
  p.text(1165, 292, '1015', num + '#ff00ff');
  p.text(1181, 294, '1015', num + '#ff00ff');
  p.text(1165, 303, '0510', num + '#0000f0');
  p.text(1181, 305, '0510', num + '#0000f0');
  p.text(1481, 268, '0510', num + '#0000f0');
  p.text(167, 817, '20.51', 'fill:#b4b4b4');
  p.line(149, 816, 165, 816, '#c0c0c0');
  p.add('path', { d: `M${p.X(148)} ${p.Y(816)}l6-4v8z`, fill: '#c0c0c0' });
  p.text(1579, 136, '42.49', 'fill:#b4b4b4');
  p.line(1628, 135, 1645, 135, '#c0c0c0');
  p.add('path', { d: `M${p.X(1646)} ${p.Y(135)}l-6-4v8z`, fill: '#c0c0c0' });
  p.text(646, 797, '①长平短升，黄金交叉，价突破②长升短平，回测不破，价突破③长升短跌，小跌破，价突破', 'fill:#f0f0f0');
  p.text(646, 836, '①长平短跌，死亡交叉，价跌破②长跌短平，弹不过，价跌破③长跌短升，小突破，价跌破', 'fill:#f0f0f0');
  p.text(791, 855, 'q', 'font-weight:700', 'middle');
  p.add('rect', { x: p.X(1622), y: p.Y(842), width: 20, height: 21, fill: '#800000' });
  p.text(1632, 853, '财', 'fill:#fff', 'middle');
}

function drawVolume() {
  const p = pane('volume', 895, 416);
  const defs = p.add('defs', {});
  const shades = {
    orange: ['#ff1e00', '#ffdc00', '#ff3c00'],
    green: ['#007800', '#00fa00', '#008c00'],
    red: ['#820c0c', '#ff2814', '#960f0f'],
    blue: ['#0064dc', '#00e1ff', '#0078f0']
  };
  defs.innerHTML = Object.entries(shades).map(([id, [a, b, c]]) =>
    `<linearGradient id="${id}"><stop offset="0" stop-color="${a}"/><stop offset=".5" stop-color="${b}"/><stop offset="1" stop-color="${c}"/></linearGradient>`).join('');
  ['+832398', '+693665', '+554932', '+416199', '+277466', '+138733'].forEach((label, i) => {
    const y = 897 + Math.round(64.5 * i);
    p.grid(y);
    p.text(1696, y + 1, label);
  });
  [['orange', main], ['green', hot], ['red', big], ['blue', retail]].forEach(([id, values]) =>
    values.forEach((v, i) => p.add('rect', { x: p.at(i) - 6, y: p.Y(v), width: 12, height: p.Y(1283) - p.Y(v), fill: `url(#${id})` })));
  p.curve(main, '#f0f028');
  p.curve(hot, '#14dc14');
  p.curve(big, '#e61414');
  p.curve(retail, '#1ee6fa', 2);
  p.curve(alert, '#f000f0', 2);
  p.line(40, 1283, 1652, 1283, '#00d2ff', { 'stroke-width': 2 });
  p.line(33, 1285, 1693, 1285, '#8c0000', { 'stroke-width': 2 });
  p.line(1693, 895, 1693, 1285, '#8c0000');
  p.add('rect', { x: p.X(1694), y: p.Y(1176), width: 78, height: 25, fill: '#46008c', stroke: '#8c0000' });
  p.text(1696, 1189, '+204118');
  p.add('rect', { x: p.X(1694), y: p.Y(1263), width: 34, height: 21, fill: 'none', stroke: '#8c0000' });
  p.text(1695, 1274, 'X10');
  [['03', 34], ['04', 192], ['05', 387], ['06', 672], ['07', 972], ['08', 1317], ['09', 1632]].forEach(([label, x]) => {
    p.line(x, 1285, x, 1290, '#8c0000');
    p.text(x + 1, 1297, label);
  });
  p.add('rect', { x: p.X(1378), y: p.Y(1285), width: 120, height: 24, fill: '#46008c', stroke: '#8c0000' });
  p.text(1380, 1298, '2025-08-07,四');
}

function draw() { drawPrice(); drawVolume(); }
draw();
addEventListener('resize', draw);
```
